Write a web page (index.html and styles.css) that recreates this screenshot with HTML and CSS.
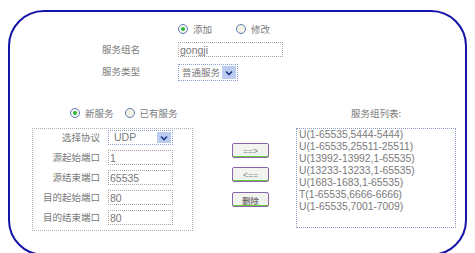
FILE: index.html
```html
<!DOCTYPE html>
<html lang="zh">
<head>
  <meta charset="UTF-8">
  <title>服务组</title>
  <link rel="stylesheet" href="styles.css">
</head>
<body>
  <div class="panel">
    <!-- верх: режим, имя и тип группы -->
    <div class="head">
      <div></div>
      <div class="radios">
        <label class="radio"><span class="dot on"></span>添加</label>
        <label class="radio"><span class="dot"></span>修改</label>
      </div>
      <div class="label">服务组名</div>
      <input class="text" type="text" value="gongji">
      <div class="label">服务类型</div>
      <div class="select type">
        <span class="val">普通服务</span>
        <span class="arrow"><svg width="8" height="6" viewBox="0 0 8 6"><path d="M1 1.5 L4 4.5 L7 1.5" fill="none" stroke="#223a88" stroke-width="1.6"/></svg></span>
      </div>
    </div>

    <div class="body">
      <div class="left">
        <div class="radios small">
          <label class="radio"><span class="dot on"></span>新服务</label>
          <label class="radio"><span class="dot"></span>已有服务</label>
        </div>
        <div class="box">
          <div class="label">选择协议</div>
          <div class="select proto">
            <span class="val">UDP</span>
            <span class="arrow"><svg width="8" height="6" viewBox="0 0 8 6"><path d="M1 1.5 L4 4.5 L7 1.5" fill="none" stroke="#223a88" stroke-width="1.6"/></svg></span>
          </div>
          <div class="label">源起始端口</div>
          <input class="text" type="text" value="1">
          <div class="label">源结束端口</div>
          <input class="text" type="text" value="65535">
          <div class="label">目的起始端口</div>
          <input class="text" type="text" value="80">
          <div class="label">目的结束端口</div>
          <input class="text" type="text" value="80">
        </div>
      </div>

      <div class="actions">
        <button class="btn">==&gt;</button>
        <button class="btn">&lt;==</button>
        <button class="btn del">删除</button>
      </div>

      <div class="right">
        <div class="title">服务组列表:</div>
        <div class="list">
          <div>U(1-65535,5444-5444)</div>
          <div>U(1-65535,25511-25511)</div>
          <div>U(13992-13992,1-65535)</div>
          <div>U(13233-13233,1-65535)</div>
          <div>U(1683-1683,1-65535)</div>
          <div>T(1-65535,6666-6666)</div>
          <div>U(1-65535,7001-7009)</div>
        </div>
      </div>
    </div>
  </div>
</body>
</html>
```

FILE: styles.css
```css
body {
  margin: 0;
  background: #ffffff;
  font-family: "Noto Sans CJK SC", "Liberation Sans", sans-serif;
  font-size: 9.5px;
  color: #7a7a7a;
}
.panel {
  margin: 10px 0 0 8px;
  width: 455px;
  height: 231px;
  border: 2px solid #1414a6;
  border-radius: 36px;
  padding-top: 11px;
  box-sizing: content-box;
}
.head {
  display: grid;
  grid-template-columns: 130px 105px;
  grid-template-rows: 12px 15px 17px;
  column-gap: 38px;
  row-gap: 7px;
}
.label {
  text-align: right;
  line-height: 15px;
  white-space: nowrap;
}
.head .label:last-of-type {
  line-height: 17px;
}
.radios {
  display: flex;
  align-items: center;
  gap: 24px;
  height: 12px;
  line-height: 12px;
}
.radios.small {
  gap: 11px;
  padding-left: 38px;
}
.radio {
  display: flex;
  align-items: center;
  gap: 5px;
}
.dot {
  width: 8px;
  height: 8px;
  border: 1px solid #5a7cb0;
  border-radius: 50%;
  background: #f4f2e2;
  position: relative;
}
.dot.on {
  background: #f6f6f6;
}
.dot.on::after {
  content: "";
  position: absolute;
  left: 2px;
  top: 2px;
  width: 4px;
  height: 4px;
  border-radius: 50%;
  background: #2fb82f;
}
.text {
  margin: 0;
  width: 100%;
  height: 15px;
  box-sizing: border-box;
  border: 1px dotted #a4a4a4;
  padding: 0 1px;
  font-family: "Liberation Sans", sans-serif;
  font-size: 10.5px;
  color: #777777;
  background: #ffffff;
  outline: none;
}
.select {
  display: flex;
  align-items: center;
  justify-content: space-between;
  box-sizing: border-box;
  border: 1px dotted #8aa0d0;
  padding: 1px;
  background: #ffffff;
}
.select.type {
  width: 60px;
  height: 17px;
}
.select.proto {
  height: 15px;
}
.select .val {
  padding-left: 2px;
  line-height: 13px;
}
.select.proto .val {
  font-family: "Liberation Sans", sans-serif;
  font-size: 10.5px;
  padding-left: 4px;
}
.arrow {
  display: flex;
  align-items: center;
  justify-content: center;
  width: 14px;
  height: 100%;
  background: #bccbf0;
}
.body {
  display: flex;
  margin-top: 26px;
  padding-left: 22px;
}
.left {
  width: 161px;
}
.box {
  margin-top: 9px;
  display: grid;
  grid-template-columns: 67px 65px;
  grid-auto-rows: 15px;
  column-gap: 8px;
  row-gap: 5px;
  height: 103px;
  box-sizing: border-box;
  padding: 1px 0 5px;
  border: 1px dotted #b0b0b0;
}
.actions {
  display: flex;
  flex-direction: column;
  gap: 9px;
  margin-left: 39px;
  padding-top: 36px;
}
.btn {
  width: 37px;
  height: 15px;
  padding: 0;
  border: 1px solid #8866aa;
  border-radius: 2px;
  background: #f3f3ef;
  box-shadow: inset 0 -1px 0 #66cc33;
  font-family: "Liberation Sans", sans-serif;
  font-size: 8.5px;
  color: #808080;
  line-height: 12px;
}
.btn.del {
  margin-top: 1px;
  font-family: "Noto Sans CJK SC", sans-serif;
  color: #444444;
}
.right {
  margin-left: 27px;
  width: 160px;
}
.title {
  height: 12px;
  line-height: 12px;
  text-align: center;
}
.list {
  margin-top: 9px;
  height: 100px;
  box-sizing: border-box;
  border: 1px dotted #8e9cc0;
  padding: 0 2px;
  font-family: "Liberation Sans", sans-serif;
  font-size: 10.3px;
  line-height: 12px;
  color: #7a7a7a;
}
```
